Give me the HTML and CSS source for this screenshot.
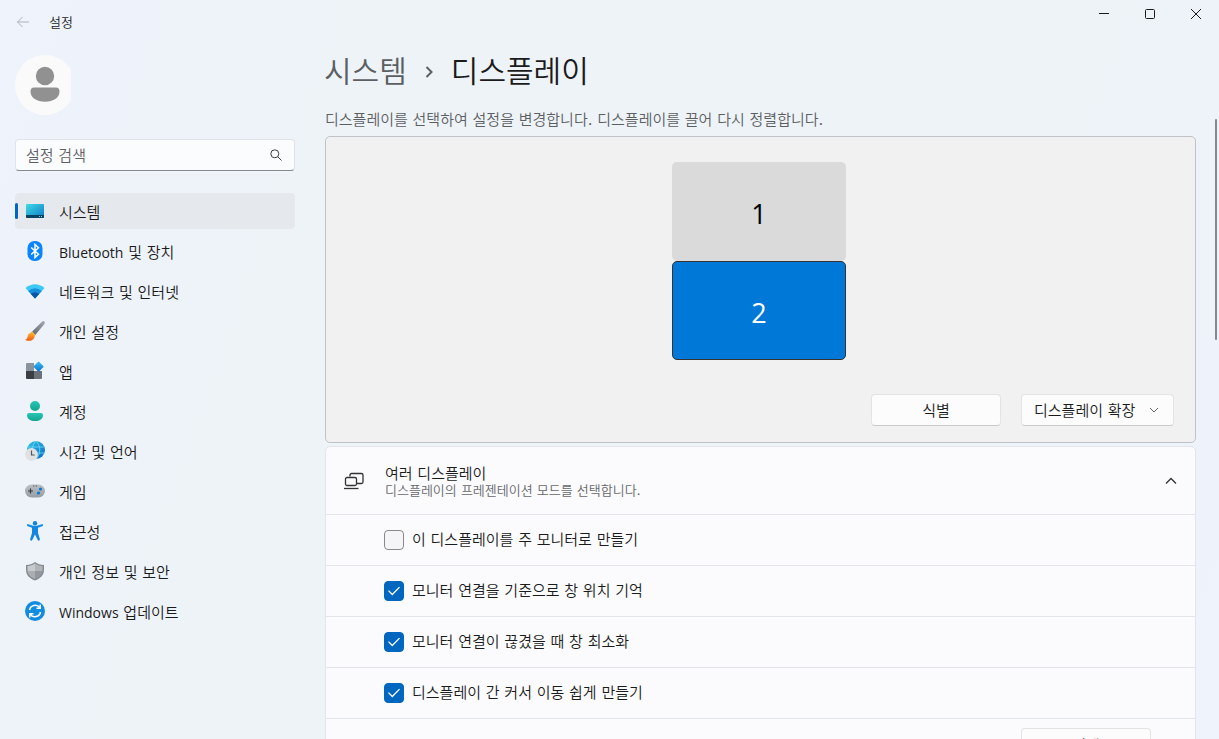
FILE: index.html
```
<!DOCTYPE html>
<html lang="ko">
  <head>
    <meta charset="UTF-8" />
    <meta name="viewport" content="width=device-width, initial-scale=1.0" />
    <title>설정</title>
    <link rel="stylesheet" href="styles.css">
  </head>
  <body>
    <header class="titlebar">
      <button class="back" type="button" aria-label="뒤로" disabled>
        <svg width="14" height="12" viewBox="0 0 14 12"><path d="M13 6H1.5M6.5 1l-5 5 5 5" /></svg>
      </button>
      <span class="app-name">설정</span>
      <div class="window-buttons">
        <button type="button" aria-label="최소화">
          <svg width="12" height="12" viewBox="0 0 12 12"><path d="M1 5.5h10" /></svg>
        </button>
        <button type="button" aria-label="최대화">
          <svg width="12" height="12" viewBox="0 0 12 12"><rect x="1.5" y="1.5" width="9" height="9" rx="1" /></svg>
        </button>
        <button type="button" aria-label="닫기">
          <svg width="12" height="12" viewBox="0 0 12 12"><path d="M1 1l10 10M11 1L1 11" /></svg>
        </button>
      </div>
    </header>

    <div class="layout">
      <aside class="sidebar">
        <div class="avatar">
          <svg width="60" height="60" viewBox="0 0 60 60">
            <circle cx="30" cy="30" r="30" fill="#fafafa" />
            <circle cx="30" cy="21" r="9.2" fill="#919191" />
            <path d="M19 32.5h22q3.5 0 3.5 4c0 6-6 10.300-14.500 10.300S15.500 42.500 15.500 36.500q0-4 3.500-4z" fill="#919191" />
          </svg>
        </div>

        <form class="search">
          <input type="text" placeholder="설정 검색" aria-label="설정 검색" />
          <button type="submit" aria-label="검색">
            <svg width="12" height="12" viewBox="0 0 12 12"><circle cx="4.800" cy="4.800" r="4" /><path d="M7.800 7.800l3.700 3.700" /></svg>
          </button>
        </form>

        <nav class="menu">
          <a href="#" class="active">
            <svg width="20" height="20" viewBox="0 0 20 20">
              <defs><linearGradient id="sys" x1="0" y1="0" x2="1" y2="1"><stop offset="0" stop-color="#3fdbe3" /><stop offset="1" stop-color="#0f78c9" /></linearGradient></defs>
              <rect x="1" y="3" width="18" height="14" rx="1" fill="url(#sys)" />
              <path d="M1 14h18v2a1 1 0 0 1-1 1H2a1 1 0 0 1-1-1z" fill="#0a4264" />
              <path d="M14 15.500h1M16 15.500h1" stroke="#7fd0ee" />
            </svg>
            <span>시스템</span>
          </a>
          <a href="#">
            <svg width="20" height="20" viewBox="0 0 20 20">
              <rect x="2.500" width="15" height="20" rx="7" fill="#0a84ff" />
              <path d="M6.200 6.500l7.300 6.800-3.500 3.200v-13l3.500 3.200-7.300 6.800" fill="none" stroke="#fff" stroke-width="1.500" />
            </svg>
            <span><span class="latin">Bluetooth</span> 및 장치</span>
          </a>
          <a href="#">
            <svg width="20" height="20" viewBox="0 0 20 20">
              <path d="M.5 7Q10-.5 19.500 7L10 17.500z" fill="#3cc8f4" />
              <path d="M3.200 10Q10 4.500 16.800 10L10 17.500z" fill="#1690dc" />
              <path d="M5.800 12.900Q10 9.500 14.200 12.900L10 17.500z" fill="#0b55a2" />
            </svg>
            <span>네트워크 및 인터넷</span>
          </a>
          <a href="#">
            <svg width="20" height="20" viewBox="0 0 20 20">
              <defs>
                <linearGradient id="handle" x1="0" y1="1" x2="1" y2="0"><stop offset="0" stop-color="#5e666e" /><stop offset="1" stop-color="#a4abb3" /></linearGradient>
                <linearGradient id="bristle" x1="0" y1="0" x2="0" y2="1"><stop offset="0" stop-color="#ffb52c" /><stop offset="1" stop-color="#ee5a12" /></linearGradient>
              </defs>
              <path d="M7.200 10.500L16.700 1q2-1.500 2.800-.5.700 1-.3 2.800L10.300 14z" fill="url(#handle)" />
              <path d="M9.500 13.500c1 3-1.500 6.300-5 6.300-1.500 0-3.500 0-4.300-1.300C2.500 18 2.200 16.500 3 14c.8-2.300 4-3.500 6.500-.5z" fill="url(#bristle)" />
              <path d="M7 10.500l3.500 3.500-1.200 1.500L5.500 12z" fill="#f7a928" />
            </svg>
            <span>개인 설정</span>
          </a>
          <a href="#">
            <svg width="20" height="20" viewBox="0 0 20 20">
              <defs><linearGradient id="tile" x1="0" y1="0" x2="1" y2="1"><stop offset="0" stop-color="#3cc3f5" /><stop offset="1" stop-color="#0a6fd0" /></linearGradient></defs>
              <path d="M2 2h7v8H1V3a1 1 0 0 1 1-1z" fill="#8b939c" />
              <path d="M1 10h8v8H2a1 1 0 0 1-1-1z" fill="#3b3e42" />
              <path d="M9 10h8v7a1 1 0 0 1-1 1H9z" fill="#6b7178" />
              <rect x="9.800" y="1.800" width="7.600" height="7.600" rx="1" transform="rotate(45 13.600 5.600)" fill="url(#tile)" />
            </svg>
            <span>앱</span>
          </a>
          <a href="#">
            <svg width="20" height="20" viewBox="0 0 20 20">
              <defs><linearGradient id="user" x1="0" y1="0" x2="0" y2="1"><stop offset="0" stop-color="#28c7b5" /><stop offset="1" stop-color="#11a48f" /></linearGradient></defs>
              <circle cx="10" cy="5" r="5" fill="url(#user)" />
              <path d="M4 12h12q2 0 2 2c0 4-3.500 6-8 6s-8-2-8-6q0-2 2-2z" fill="url(#user)" />
            </svg>
            <span>계정</span>
          </a>
          <a href="#">
            <svg width="20" height="20" viewBox="0 0 20 20">
              <defs><linearGradient id="globe" x1="0" y1="0" x2="1" y2="1"><stop offset="0" stop-color="#35c5e5" /><stop offset="1" stop-color="#0868c4" /></linearGradient></defs>
              <circle cx="11" cy="9" r="9" fill="url(#globe)" />
              <path d="M2.500 6h17M2.500 12h17M11 0C6 5 6 13 11 18M11 0c5 5 5 13 0 18" fill="none" stroke="#72dcf6" stroke-width=".8" />
              <circle cx="6.500" cy="13.500" r="6.500" fill="#dfe1e3" />
              <path d="M6.500 9.500v4.500h3.200" fill="none" stroke="#555" stroke-width="1.200" />
            </svg>
            <span>시간 및 언어</span>
          </a>
          <a href="#">
            <svg width="20" height="20" viewBox="0 0 20 20">
              <defs><linearGradient id="pad" x1="0" y1="0" x2="0" y2="1"><stop offset="0" stop-color="#bbc0c5" /><stop offset="1" stop-color="#969da4" /></linearGradient></defs>
              <rect y="3.500" width="20" height="13" rx="6.500" fill="url(#pad)" />
              <path d="M3 10h5M5.500 7.500v5" stroke="#36393d" stroke-width="1.200" />
              <path d="M8 5h1.300M10.700 5H12" stroke="#555" />
              <circle cx="15.500" cy="8" r="1.600" fill="#0877d2" />
              <circle cx="13.500" cy="12" r="1.600" fill="#0877d2" />
            </svg>
            <span>게임</span>
          </a>
          <a href="#">
            <svg width="20" height="20" viewBox="0 0 20 20">
              <circle cx="10" cy="2.200" r="2.200" fill="#1283d8" />
              <path d="M3 4.200l5 1.700h4l5-1.700" fill="none" stroke="#1792e3" stroke-width="2.200" stroke-linecap="round" stroke-linejoin="round" />
              <path d="M7 5h6v7l2 6.500q-.5 1.500-2 1l-3-6-3 6q-1.500.5-2-1L7 12z" fill="#1488dc" />
            </svg>
            <span>접근성</span>
          </a>
          <a href="#">
            <svg width="20" height="20" viewBox="0 0 20 20">
              <path d="M10 1c2.500 2 5.500 2.700 9 3v5c0 5-3.500 8.500-9 10.500C4.500 17.500 1 14 1 9V4c3.500-.3 6.500-1 9-3z" fill="#858a90" />
              <path d="M10 2.500c2 1.300 4.500 2.200 7.500 2.600V10H10z" fill="#b1b5b9" />
              <path d="M10 2.500C8 3.800 5.500 4.700 2.500 5.100V10H10z" fill="#c8cbce" />
              <path d="M2.500 10H10v8c-4.500-1.700-7.300-4.500-7.500-8z" fill="#aaaeb3" />
              <path d="M17.500 10H10v8c4.500-1.700 7.300-4.500 7.500-8z" fill="#93989e" />
            </svg>
            <span>개인 정보 및 보안</span>
          </a>
          <a href="#">
            <svg width="20" height="20" viewBox="0 0 20 20">
              <circle cx="10" cy="10" r="10" fill="#118ce0" />
              <path d="M4.500 9a5.700 5.700 0 0 1 10.300-2.200M15.500 11a5.700 5.700 0 0 1-10.300 2.200M15.200 3.500v3.700h-3.700M4.800 16.500v-3.700h3.700" fill="none" stroke="#fff" stroke-width="1.500" />
            </svg>
            <span><span class="latin">Windows</span> 업데이트</span>
          </a>
        </nav>
      </aside>

      <main class="content">
        <h1>
          <a href="#">시스템</a>
          <svg width="8" height="12" viewBox="0 0 8 12"><path d="M1.500 1l5 5-5 5" /></svg>
          <span>디스플레이</span>
        </h1>
        <p class="hint">디스플레이를 선택하여 설정을 변경합니다. 디스플레이를 끌어 다시 정렬합니다.</p>

        <section class="arrange">
          <div class="monitors">
            <button type="button" class="monitor">1</button>
            <button type="button" class="monitor selected">2</button>
          </div>
          <div class="actions">
            <button type="button" class="btn">식별</button>
            <div class="select">
              <select aria-label="프레젠테이션 모드">
                <option>디스플레이 확장</option>
                <option>디스플레이 복제</option>
              </select>
              <svg width="10" height="6" viewBox="0 0 10 6"><path d="M1 1l4 4 4-4" /></svg>
            </div>
          </div>
        </section>

        <section class="card">
          <div class="card-header">
            <svg class="card-icon" width="20" height="18" viewBox="0 0 20 18">
              <path d="M6 4.500V3q0-1.500 1.500-1.500h10Q19 1.500 19 3v7q0 1.500-1.500 1.500H13" />
              <rect x="1.500" y="5.500" width="11" height="8" rx="1.500" />
              <path d="M0 16.500h14.500" />
            </svg>
            <div class="card-title">
              <h2>여러 디스플레이</h2>
              <p>디스플레이의 프레젠테이션 모드를 선택합니다.</p>
            </div>
            <button type="button" class="collapse" aria-label="접기">
              <svg width="12" height="8" viewBox="0 0 12 8"><path d="M1 6.500l5-5 5 5" /></svg>
            </button>
          </div>
          <label class="row"><input type="checkbox" />이 디스플레이를 주 모니터로 만들기</label>
          <label class="row"><input type="checkbox" checked />모니터 연결을 기준으로 창 위치 기억</label>
          <label class="row"><input type="checkbox" checked />모니터 연결이 끊겼을 때 창 최소화</label>
          <label class="row"><input type="checkbox" checked />디스플레이 간 커서 이동 쉽게 만들기</label>
          <div class="row detect">
            <button type="button" class="btn">검색</button>
          </div>
        </section>
      </main>

      <div class="scrollbar"><div class="thumb"></div></div>
    </div>
  </body>
</html>
```
FILE: styles.css
```
* {
  box-sizing: border-box;
}

body {
  margin: 0;
  height: 100vh;
  display: flex;
  flex-direction: column;
  overflow: hidden;
  font-family: "DejaVu Serif", "Noto Sans CJK KR", sans-serif;
  font-size: 15px;
  font-weight: 350;
  line-height: 20px;
  color: #1b1b1b;
  background-color: #eef3f8;
  background-image: linear-gradient(110deg, #eef3fc 0%, #eef3f8 25%, #eef3f8 75%, #eef3fc 100%);
}

button,
input,
select {
  font: inherit;
  color: inherit;
}

button {
  padding: 0;
  border: none;
  background: none;
}

svg {
  flex: none;
}

.latin {
  font-family: "Open Sans", sans-serif;
  font-size: 14px;
  font-weight: 400;
}

.titlebar {
  display: flex;
  align-items: center;
  height: 44px;
  flex: none;
  padding-left: 16px;
}

.back {
  display: flex;
}

.back svg {
  fill: none;
  stroke: #b0b3b7;
}

.app-name {
  margin-left: 19px;
  padding-top: 2px;
  font-size: 13px;
}

.window-buttons {
  display: flex;
  align-self: flex-start;
  margin-left: auto;
}

.window-buttons button {
  display: flex;
  align-items: center;
  justify-content: center;
  width: 46px;
  height: 28px;
}

.window-buttons svg {
  fill: none;
  stroke: #1b1b1b;
}

.layout {
  display: flex;
  flex: 1;
  min-height: 0;
}

.sidebar {
  width: 310px;
  flex: none;
  padding: 11px 15px 0;
}

.avatar {
  width: 56px;
  height: 60px;
  overflow: hidden;
}

.search {
  display: flex;
  align-items: center;
  height: 32px;
  margin: 24px 0 22px;
  padding: 0 12px 0 10px;
  border: 1px solid #dfe4ea;
  border-bottom-color: #85888c;
  border-radius: 4px;
  background-color: #fbfcfe;
}

.search input {
  flex: 1;
  min-width: 0;
  padding: 2px 0 0;
  border: none;
  outline: none;
  background: none;
}

.search input::placeholder {
  color: #5f6063;
}

.search button {
  display: flex;
}

.search svg {
  fill: none;
  stroke: #3c3c3c;
}

.menu {
  display: flex;
  flex-direction: column;
  gap: 4px;
}

.menu a {
  display: flex;
  align-items: center;
  gap: 14px;
  height: 36px;
  padding-left: 10px;
  border-radius: 4px;
  color: #1b1b1b;
  text-decoration: none;
}

.menu a > span {
  padding-top: 4px;
}

.menu .active {
  position: relative;
  background-color: #e5e9ee;
}

.menu .active::before {
  content: "";
  position: absolute;
  left: 0;
  top: 10px;
  width: 3px;
  height: 16px;
  border-radius: 2px;
  background-color: #0067c0;
}

.content {
  flex: 1;
  min-width: 0;
  padding: 8px 0 0 14px;
}

h1 {
  display: flex;
  align-items: center;
  gap: 18px;
  margin: 0;
  font-size: 30px;
  font-weight: 350;
  line-height: 40px;
}

h1 a {
  color: #5c5f62;
  text-decoration: none;
}

h1 svg {
  fill: none;
  stroke: #5c5f62;
  stroke-width: 2;
}

.hint {
  margin: 18px 1px 6px;
  color: #5c5f62;
}

.arrange {
  margin-left: 1px;
  padding: 25px 21px 16px;
  border: 1px solid #bfc2c7;
  border-radius: 5px;
  background-color: #f1f1f1;
}

.monitors {
  display: flex;
  flex-direction: column;
  align-items: center;
  padding-right: 3px;
}

.monitor {
  width: 174px;
  height: 99px;
  padding-top: 4px;
  border-radius: 5px;
  background-color: #dadada;
  font-family: "Open Sans", sans-serif;
  font-size: 27px;
  font-weight: 400;
  color: #000;
}

.monitor.selected {
  border: 1px solid #333;
  background-color: #0078d7;
  color: #fff;
}

.actions {
  display: flex;
  justify-content: flex-end;
  gap: 20px;
  margin-top: 34px;
}

.btn {
  width: 130px;
  height: 32px;
  padding-top: 2px;
  border: 1px solid #e3e3e5;
  border-bottom-color: #cbcbcd;
  border-radius: 4px;
  background-color: #fcfcfc;
}

.select {
  position: relative;
}

.select select {
  appearance: none;
  width: 153px;
  height: 32px;
  padding: 2px 12px 0;
  border: 1px solid #e3e3e5;
  border-bottom-color: #cbcbcd;
  border-radius: 4px;
  background-color: #fcfcfc;
}

.select svg {
  position: absolute;
  right: 15px;
  top: 13px;
  fill: none;
  stroke: #6b6b6b;
  pointer-events: none;
}

.card {
  margin: 3px 0 0 1px;
  border: 1px solid #e2e5ea;
  border-radius: 5px;
  background-color: #fbfbfd;
}

.card-header {
  display: flex;
  align-items: center;
  height: 67px;
  padding: 0 18px;
}

.card-icon {
  fill: none;
  stroke: #333;
  stroke-width: 1.3;
}

.card-title {
  flex: 1;
  margin-left: 21px;
  padding-top: 2px;
}

.card-title h2 {
  margin: 0;
  font-size: 15px;
  font-weight: 350;
  line-height: 18px;
}

.card-title p {
  margin: 0;
  font-size: 13px;
  line-height: 16px;
  color: #66686b;
}

.collapse {
  display: flex;
}

.collapse svg {
  fill: none;
  stroke: #333;
  stroke-width: 1.3;
}

.row {
  display: flex;
  align-items: center;
  gap: 8px;
  height: 51px;
  padding-left: 58px;
  border-top: 1px solid #e2e5ea;
}

.row input {
  appearance: none;
  display: grid;
  place-items: center;
  width: 20px;
  height: 20px;
  margin: 0;
  border: 1px solid #88898b;
  border-radius: 4px;
  background-color: #f5f5f7;
}

.row input:checked {
  border-color: #0067c0;
  background-color: #0067c0;
}

.row input:checked::before {
  content: "";
  width: 12px;
  height: 10px;
  background-color: #fff;
  clip-path: polygon(0 50%, 8% 42%, 36% 76%, 92% 8%, 100% 16%, 36% 94%);
}

.detect {
  justify-content: flex-end;
  padding-right: 44px;
}

.detect .btn {
  padding-top: 4px;
}

.scrollbar {
  width: 23px;
  flex: none;
  padding: 75px 2px 0 0;
}

.thumb {
  width: 2px;
  height: 221px;
  margin-left: auto;
  border-radius: 1px;
  background-color: #85888c;
}
```
